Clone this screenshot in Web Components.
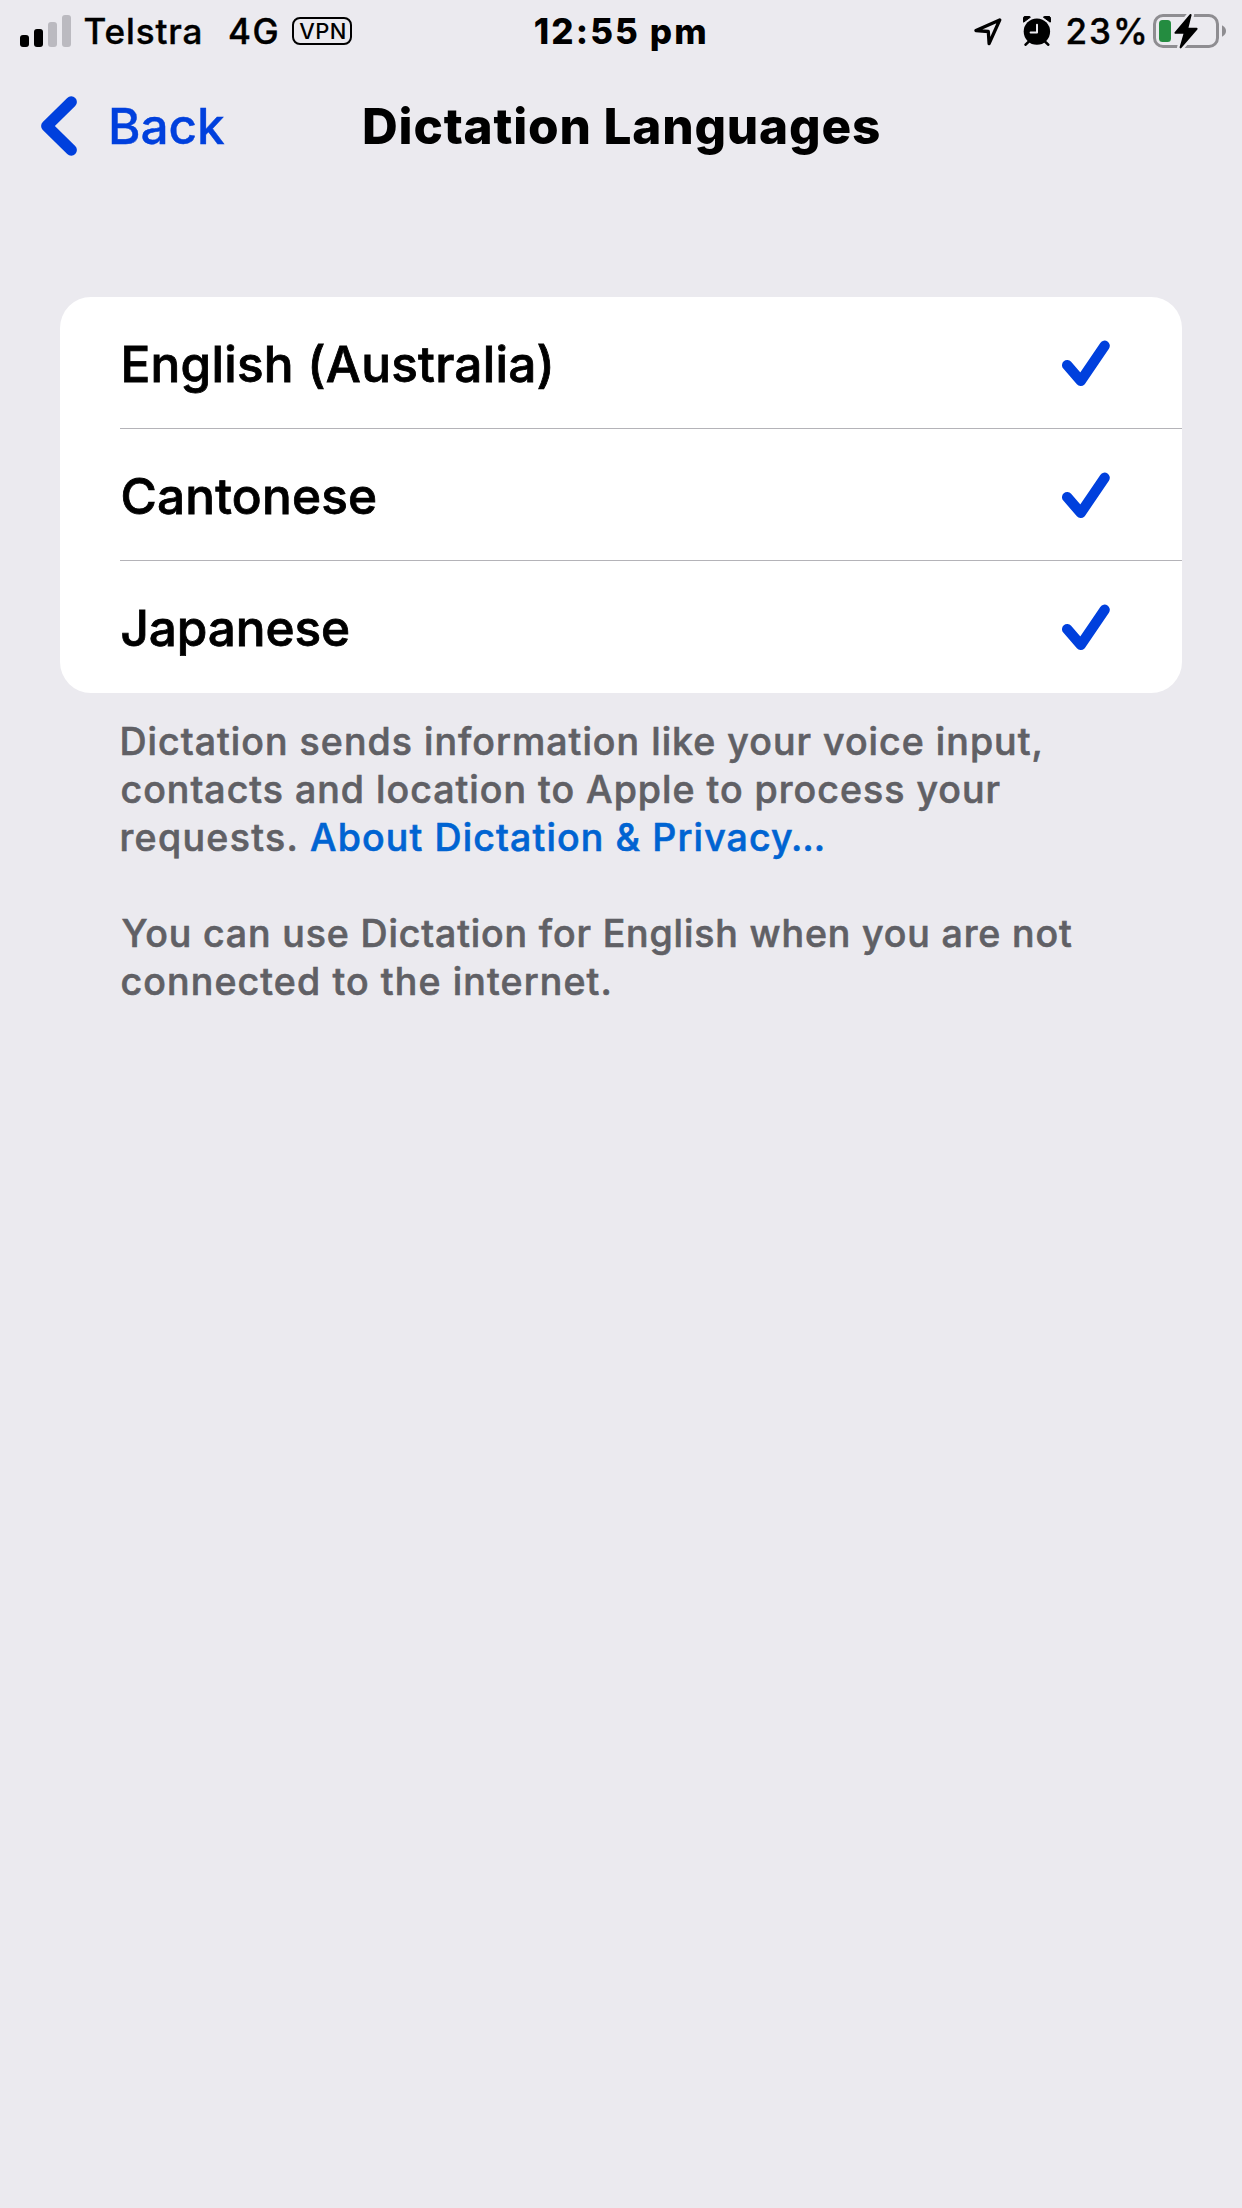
<!DOCTYPE html>
<html lang="en">
<head>
<meta charset="utf-8">
<title>Dictation Languages</title>
<style>
  html, body { margin: 0; padding: 0; background: #ebeaef; }
  body { font-family: Inter, "Liberation Sans", sans-serif; color: #000; }
</style>
</head>
<body>
<dictation-screen></dictation-screen>
<script>
  const define = (name, html) => {
    const t = document.createElement('template');
    t.innerHTML = html;
    customElements.define(name, class extends HTMLElement {
      constructor() {
        super();
        this.attachShadow({ mode: 'open' }).append(t.content.cloneNode(true));
      }
    });
  };

  // A run of text tracked so that its ink spans exactly `span` pixels.
  const pen = document.createElement('canvas').getContext('2d');
  class TrackedText extends HTMLElement {
    connectedCallback() {
      if (!this.shadowRoot) {
        this.attachShadow({ mode: 'open' }).innerHTML =
          '<style>:host{display:inline-block;white-space:nowrap;flex:none}span{display:inline-block}</style><span><slot></slot></span>';
      }
      const text = this.textContent;
      const span = parseFloat(this.getAttribute('span'));
      const cs = getComputedStyle(this);
      pen.font = `${cs.fontWeight} ${cs.fontSize} ${cs.fontFamily}`;
      const m = pen.measureText(text);
      const left = -m.actualBoundingBoxLeft;
      const right = m.width - m.actualBoundingBoxRight;
      const run = this.shadowRoot.querySelector('span');
      const ink = run.getBoundingClientRect().width - left - right;
      this.style.width = span + 'px';
      run.style.letterSpacing = (span - ink) / (text.length - 1) + 'px';
      run.style.marginLeft = -left + 'px';
    }
  }

  define('signal-bars', `
    <style>:host{display:block;width:51px;height:32px} svg{display:block}</style>
    <svg width="51" height="32" viewBox="0 0 51 32">
      <rect x="0" y="20" width="9" height="12" rx="3"/>
      <rect x="14" y="14" width="9" height="18" rx="3"/>
      <rect x="28" y="7" width="9" height="25" rx="3" fill="#bbbac0"/>
      <rect x="42" y="0" width="9" height="32" rx="3" fill="#bbbac0"/>
    </svg>`);

  define('vpn-badge', `
    <style>
      :host{display:flex;box-sizing:border-box;width:60px;height:28px;border:2px solid #000;border-radius:8px;
        align-items:center;justify-content:center;font-size:22px;font-weight:500;line-height:24px;-webkit-text-stroke:0}
    </style><slot></slot>`);

  define('location-arrow', `
    <style>:host{display:block} svg{display:block}</style>
    <svg width="28" height="28" viewBox="0 0 28 28" fill="none" stroke="#000" stroke-width="3.3" stroke-linejoin="round">
      <path d="M25.7 2 L2 12.6 L14.3 13.5 L15.1 25.6 Z"/>
    </svg>`);

  define('alarm-clock', `
    <style>:host{display:block} svg{display:block}</style>
    <svg width="28" height="30" viewBox="0 0 28 30">
      <path d="M.6 6.2 A4.2 4.2 0 0 1 7.4 1.2 Z M27.2 6.2 A4.2 4.2 0 0 0 20.4 1.2 Z" stroke="#000" stroke-width="1" stroke-linejoin="round"/>
      <circle cx="13.9" cy="15.6" r="13.2"/>
      <path d="M5.5 25.8 L2.6 28.7 M22.3 25.8 L25.2 28.7" stroke="#000" stroke-width="2.6" stroke-linecap="round"/>
      <path d="M14 8.7 V16.5 H7.6" fill="none" stroke="#ebeaef" stroke-width="2" stroke-linecap="round" stroke-linejoin="round"/>
    </svg>`);

  define('battery-icon', `
    <style>:host{display:block} svg{display:block}</style>
    <svg width="74" height="36" viewBox="0 0 74 36">
      <rect x="1.5" y="2.5" width="63" height="31" rx="8.5" fill="none" stroke="#8e8d91" stroke-width="3"/>
      <path d="M69 12.3 Q73 14.5 73 18 Q73 21.5 69 23.7 Z" fill="#8e8d91"/>
      <path d="M37.6 1.9 L22.4 19.8 H31.8 L27.6 34.4 L43.6 15.8 H34.2 Z" fill="#ebeaef" stroke="#ebeaef" stroke-width="7" stroke-linejoin="round"/>
      <rect x="6" y="7" width="12" height="22" rx="3.5" fill="#248c40"/>
      <path d="M37.6 1.9 L22.4 19.8 H31.8 L27.6 34.4 L43.6 15.8 H34.2 Z" stroke="#000" stroke-width="2" stroke-linejoin="round"/>
    </svg>`);

  define('status-bar', `
    <style>
      :host{display:grid;grid-template-columns:1fr auto 1fr;height:63px;align-items:center;
        padding:0 16px 0 14px;font-size:35px;font-weight:500;line-height:62px}
      .side{display:flex;align-items:center;height:62px;-webkit-text-stroke:.4px}
      .left{padding-left:6px}
      .right{justify-content:flex-end;margin-right:-1px}
      .time{font-weight:800}
      tracked-text{margin-top:-1px}
      signal-bars{margin-right:13.5px;margin-top:-2px}
      .net{margin-left:28.5px}
      vpn-badge{margin-left:14.5px;margin-top:-2px}
      vpn-badge tracked-text{margin-top:0}
      alarm-clock{margin:-2px 17px 0 20.5px}
      location-arrow{margin:1px 0 0 0}
      battery-icon{margin-left:8px;margin-top:-2px}
    </style>
    <div class="side left">
      <signal-bars></signal-bars>
      <tracked-text span="116">Telstra</tracked-text>
      <tracked-text class="net" span="48.5">4G</tracked-text>
      <vpn-badge><tracked-text span="45.5">VPN</tracked-text></vpn-badge>
    </div>
    <tracked-text class="time" span="170.5">12:55 pm</tracked-text>
    <div class="side right">
      <location-arrow></location-arrow>
      <alarm-clock></alarm-clock>
      <tracked-text span="77.5">23%</tracked-text>
      <battery-icon></battery-icon>
    </div>`);

  define('nav-bar', `
    <style>
      :host{display:grid;grid-template-columns:1fr auto 1fr;align-items:center;height:126px;
        padding:0 0 0 41px;margin-right:40px;font-size:49.5px;line-height:126px}
      .back{display:flex;align-items:center;gap:34px;color:#0040dd;font-weight:500;-webkit-text-stroke:.4px}
      .title{font-weight:800}
      svg{display:block}
    </style>
    <div class="back">
      <svg width="36" height="60" viewBox="0 0 36 60" fill="none" stroke="currentColor" stroke-width="11.4" stroke-linecap="round" stroke-linejoin="round">
        <path d="M30.2 6 L5.8 30 L30.2 54"/>
      </svg>
      <tracked-text span="114">Back</tracked-text>
    </div>
    <tracked-text class="title" span="515">Dictation Languages</tracked-text>`);

  define('language-list', `
    <style>:host{display:flex;flex-direction:column;margin:108px 60px 0;background:#fff;border-radius:31px;overflow:hidden}</style>
    <slot></slot>`);

  define('language-row', `
    <style>
      :host{display:flex;align-items:center;justify-content:space-between;box-sizing:border-box;height:132px;
        margin-left:60px;padding:0 72px 0 2.5px;border-bottom:1px solid #b4b3b8;
        font-size:49.5px;font-weight:500;-webkit-text-stroke:.8px;line-height:131px}
      :host(:last-child){border-bottom-color:transparent}
      ::slotted(tracked-text){margin-top:3px}
      svg{display:block}
    </style>
    <slot></slot>
    <svg width="48" height="46" viewBox="0 0 48 46" fill="none" stroke="#0040dd" stroke-width="10.4" stroke-linecap="round" stroke-linejoin="round">
      <path d="M5.2 25.2 L18.8 40.8 L42.6 5.8"/>
    </svg>`);

  define('footer-note', `
    <style>
      :host{display:block;margin:25px 0 0 121.5px;font-size:37.5px;font-weight:500;-webkit-text-stroke:.6px;line-height:48px;color:#606065}
      p{margin:0 0 48px;display:flex;flex-direction:column}
      .line{display:flex;height:48px}
      .stem{padding-left:1px}
      a{color:#0064d2;margin-left:14.5px}
    </style>
    <p>
      <span class="line stem"><tracked-text span="918">Dictation sends information like your voice input,</tracked-text></span>
      <span class="line"><tracked-text span="878">contacts and location to Apple to process your</tracked-text></span>
      <span class="line"><tracked-text span="174">requests.</tracked-text><a><tracked-text span="513">About Dictation &amp; Privacy…</tracked-text></a></span>
    </p>
    <p>
      <span class="line"><tracked-text span="950.5">You can use Dictation for English when you are not</tracked-text></span>
      <span class="line"><tracked-text span="488">connected to the internet.</tracked-text></span>
    </p>`);

  define('dictation-screen', `
    <style>:host{display:block;width:1242px;min-height:2208px;background:#ebeaef}
      .stem{margin-left:1px}</style>
    <status-bar></status-bar>
    <nav-bar></nav-bar>
    <language-list>
      <language-row><tracked-text class="stem" span="427">English (Australia)</tracked-text></language-row>
      <language-row><tracked-text span="252.5">Cantonese</tracked-text></language-row>
      <language-row><tracked-text span="225.5">Japanese</tracked-text></language-row>
    </language-list>
    <footer-note></footer-note>`);

  customElements.define('tracked-text', TrackedText);
</script>
</body>
</html>
